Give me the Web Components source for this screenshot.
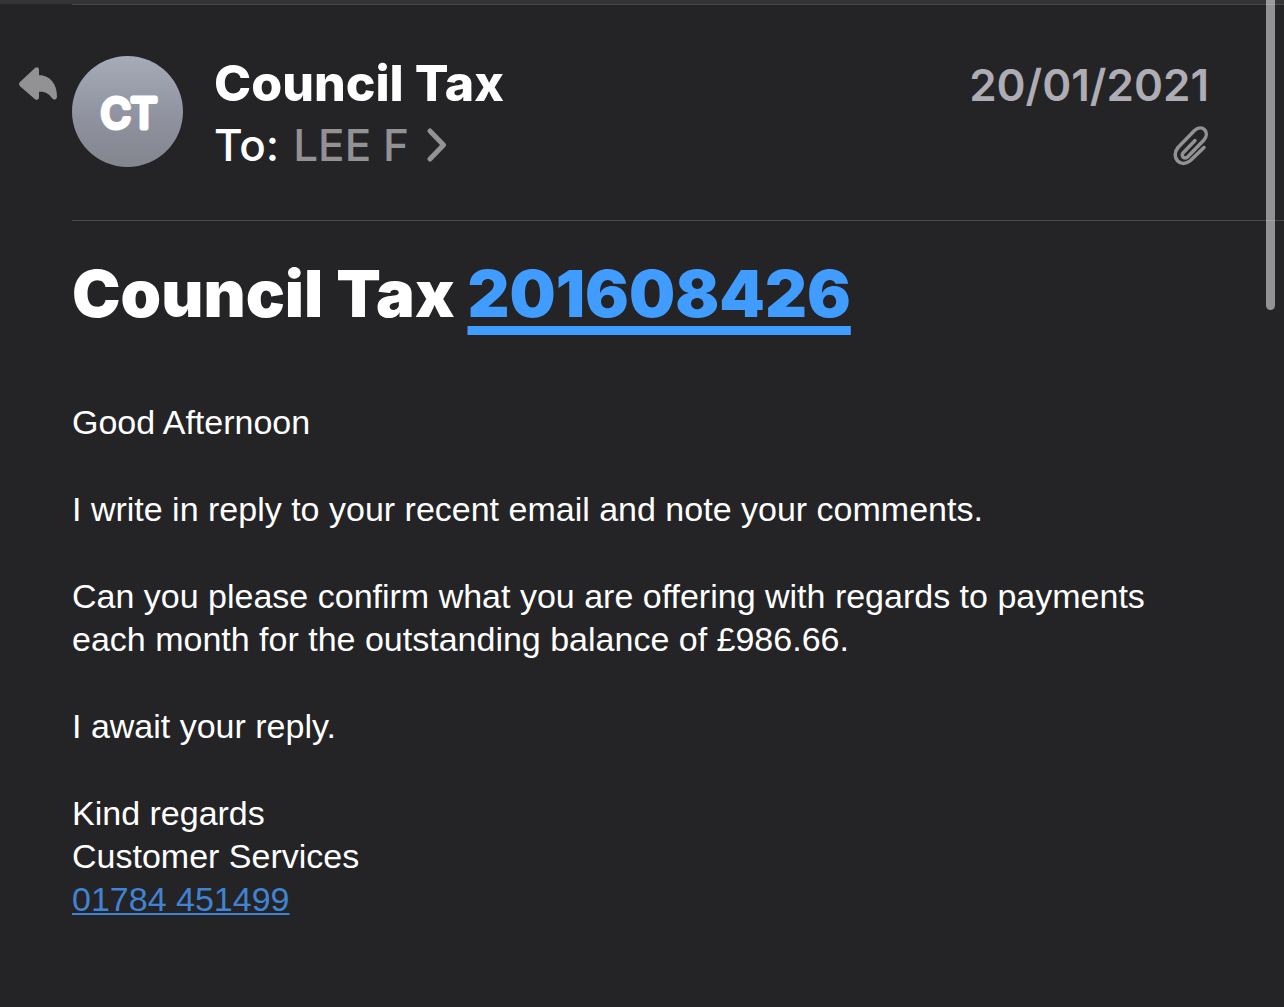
<!DOCTYPE html>
<html lang="en">
<head>
<meta charset="utf-8">
<meta name="viewport" content="width=device-width, initial-scale=1">
<title>Council Tax</title>
<style>
html { background: #242426; }
body { margin: 0; color: #fff; font-family: Inter, "Liberation Sans", sans-serif; overflow: hidden; }
</style>
</head>
<body>
<mail-view></mail-view>

<template id="mail-avatar">
<style>
:host { display: block; width: 111px; height: 111px; border-radius: 50%; background: linear-gradient(#a5abb7, #8e919d 60%, #83868e); }
svg { display: block; width: 100%; height: 100%; }
text { font: 400 41px Inter, sans-serif; fill: #fff; stroke: #fff; stroke-width: 5; stroke-linejoin: round; text-anchor: middle; }
</style>
<svg viewBox="0 0 111 111"><text x="57" y="72"></text></svg>
</template>

<template id="mail-header">
<style>
:host { display: grid; grid-template-columns: 72px 111px 1fr auto; align-items: start; padding: 51px 75px 53px 0; }
.reply { padding: 10px 0 0 18px; }
svg { display: block; }
.who { padding-left: 31px; }
.from { margin: 0; font-size: 50px; line-height: 54px; font-weight: 800; }
.to { display: flex; align-items: center; gap: 14px; font-size: 44px; line-height: 54px; padding-top: 8px; margin-bottom: -8px; font-weight: 500; }
.to button { display: flex; align-items: center; gap: 18px; padding: 0; border: 0; background: none; color: #929294; font: inherit; }
.meta { display: flex; flex-direction: column; align-items: flex-end; }
time { font-size: 44px; line-height: 58px; font-weight: 600; color: #aeacb4; }
.clip { padding-top: 11px; }
</style>
<div class="reply"><svg width="40" height="36" viewBox="0 0 40 36" role="img" aria-label="Replied"><path d="M3 17 L18 3 Q19.500 2 19.500 4 V10.500 C31 10.500 37.500 18 37.500 31 Q37 33 35.500 31.500 C31 25.500 27 24 19.500 24 V31 Q19.500 33 18 32 L3 19 Q2 18 3 17Z" fill="#929294" stroke="#929294" stroke-width="3" stroke-linejoin="round"/></svg></div>
<slot name="avatar"></slot>
<div class="who">
<p class="from"><slot name="from"></slot></p>
<div class="to"><span>To:</span><button type="button"><slot name="to"></slot><svg width="20" height="34" viewBox="0 0 20 34" aria-hidden="true"><path d="M3 3 L16.500 17 L3 31" fill="none" stroke="#929294" stroke-width="5" stroke-linecap="round" stroke-linejoin="round"/></svg></button></div>
</div>
<div class="meta">
<time datetime="2021-01-20"><slot name="date"></slot></time>
<div class="clip"><svg width="38" height="42" viewBox="0 0 38 42" role="img" aria-label="Attachment"><path d="M24 15.500 L12.500 27.500 C9 31 13.500 35 17 31.500 L32.500 15.500 C40 7 31 -1.500 23.500 5.500 L7 22.500 C-1 32 9.500 44 19.500 35.500 L33 22.500" fill="none" stroke="#929294" stroke-width="3.500" stroke-linecap="round" stroke-linejoin="round"/></svg></div>
</div>
</template>

<template id="mail-body">
<style>
:host { display: block; padding: 34px 74px 40px 0; }
h1 { margin: 0; font-size: 65px; line-height: 78px; font-weight: 900; }
h1 a { color: #409cff; text-decoration: underline; text-decoration-thickness: 9px; text-underline-offset: 9px; text-decoration-skip-ink: none; }
.text { display: flex; flex-direction: column; gap: 44px; padding-top: 68px; font-family: "Liberation Sans", Arial, sans-serif; font-size: 34px; line-height: 43px; }
p { margin: 0; }
.text a { color: #4183d2; text-decoration: underline; text-decoration-thickness: 2px; text-underline-offset: 2px; text-decoration-skip-ink: none; }
</style>
<h1>Council Tax <a href="tel:201608426">201608426</a></h1>
<div class="text">
<p>Good Afternoon</p>
<p>I write in reply to your recent email and note your comments.</p>
<p>Can you please confirm what you are offering with regards to payments each month for the outstanding balance of £986.66.</p>
<p>I await your reply.</p>
<p>Kind regards<br>Customer Services<br><a href="tel:01784451499">01784 451499</a></p>
</div>
</template>

<template id="mail-view">
<style>
:host { display: block; position: relative; min-height: 100vh; }
.edge { height: 4px; background: #343437; }
.rule { height: 1px; margin-left: 72px; background: #48484a; }
mail-body { margin-left: 72px; }
.thumb { position: absolute; top: -8px; right: 9px; width: 9px; height: 318px; border-radius: 5px; background: #ffffff80; }
</style>
<div class="edge"></div>
<div class="rule"></div>
<mail-header>
<mail-avatar slot="avatar" initials="CT"></mail-avatar>
<span slot="from">Council Tax</span>
<span slot="to">LEE F</span>
<span slot="date">20/01/2021</span>
</mail-header>
<div class="rule"></div>
<mail-body></mail-body>
<div class="thumb"></div>
</template>

<script>
class TemplateElement extends HTMLElement {
  constructor() {
    super();
    this.attachShadow({ mode: "open" })
      .append(document.getElementById(this.localName).content.cloneNode(true));
  }
}
customElements.define("mail-avatar", class extends TemplateElement {
  connectedCallback() {
    this.shadowRoot.querySelector("text").textContent = this.getAttribute("initials");
  }
});
customElements.define("mail-header", class extends TemplateElement {});
customElements.define("mail-body", class extends TemplateElement {});
customElements.define("mail-view", class extends TemplateElement {});
</script>
</body>
</html>
